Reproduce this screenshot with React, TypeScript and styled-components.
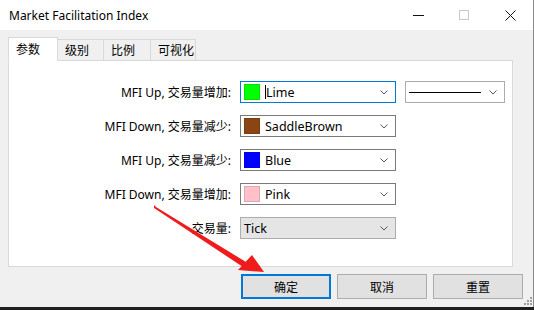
import React from "react";
import styled, { createGlobalStyle } from "styled-components";

const GlobalStyle = createGlobalStyle`
  html, body {
    margin: 0;
    padding: 0;
    background: #1e1e1e;
  }
  body {
    width: 534px;
    height: 310px;
    overflow: hidden;
    font-family: "Noto Sans", "Noto Sans CJK SC", sans-serif;
  }
`;

const FONT = `"Noto Sans", "Noto Sans CJK SC", sans-serif`;

type Row = {
  label: string;
  color?: string;
  value: string;
  focused?: boolean;
  readonly?: boolean;
  lineStyle?: boolean;
};

const rows: Row[] = [
  { label: "MFI Up, 交易量增加:", color: "#00ff00", value: "Lime", focused: true, lineStyle: true },
  { label: "MFI Down, 交易量减少:", color: "#8b4513", value: "SaddleBrown" },
  { label: "MFI Up, 交易量减少:", color: "#0000ff", value: "Blue" },
  { label: "MFI Down, 交易量增加:", color: "#ffc0cb", value: "Pink" },
  { label: "交易量:", value: "Tick", readonly: true },
];

const tabs = [
  { name: "参数", w: 50 },
  { name: "级别", w: 47 },
  { name: "比例", w: 48 },
  { name: "可视化", w: 46 },
];

const Chevron = () => (
  <svg width="8" height="5" viewBox="0 0 8 5">
    <path d="M0.5 0.5 L4 4 L7.5 0.5" fill="none" stroke="#555" strokeWidth="1" />
  </svg>
);

export default function App() {
  return (
    <>
      <GlobalStyle />
      <Window>
        <TitleBar>
          <Title>Market Facilitation Index</Title>
          <Controls>
            <CtrlBtn>
              <svg width="11" height="11" viewBox="0 0 11 11">
                <path d="M0 5.5 H11" stroke="#111" strokeWidth="1" />
              </svg>
            </CtrlBtn>
            <CtrlBtn>
              <svg width="11" height="11" viewBox="0 0 11 11">
                <rect x="0.5" y="0.5" width="9" height="9" fill="none" stroke="#c8c8c8" />
              </svg>
            </CtrlBtn>
            <CtrlBtn>
              <svg width="11" height="11" viewBox="0 0 11 11">
                <path d="M0.5 0.5 L10.5 10.5 M10.5 0.5 L0.5 10.5" stroke="#111" strokeWidth="1" />
              </svg>
            </CtrlBtn>
          </Controls>
        </TitleBar>
        <Body>
          <TabStrip>
            {tabs.map((t, i) => (
              <Tab key={t.name} $active={i === 0} $w={t.w}>
                {t.name}
              </Tab>
            ))}
          </TabStrip>
          <Panel>
            <Form>
              {rows.map((r) => (
                <React.Fragment key={r.label}>
                  <Label>{r.label}</Label>
                  <FieldGroup>
                    <Combo $focused={r.focused} $readonly={r.readonly}>
                      {r.color && <Swatch style={{ background: r.color }} />}
                      <ComboText $pad={!r.color}>
                        {r.focused && <Caret />}
                        {r.value}
                      </ComboText>
                      <Chevron />
                    </Combo>
                    {r.lineStyle && (
                      <LineCombo>
                        <LineSample />
                        <Chevron />
                      </LineCombo>
                    )}
                  </FieldGroup>
                </React.Fragment>
              ))}
            </Form>
          </Panel>
          <ButtonRow>
            <Button $default>确定</Button>
            <Button>取消</Button>
            <Button>重置</Button>
          </ButtonRow>
          <Grip>
            <svg width="8" height="8" viewBox="0 0 8 8">
              {[
                [6, 0],
                [6, 3],
                [3, 3],
                [6, 6],
                [3, 6],
                [0, 6],
              ].map(([x, y]) => (
                <rect key={`${x}-${y}`} x={x} y={y} width="2" height="2" fill="#a0a0a0" />
              ))}
            </svg>
          </Grip>
        </Body>
        <Arrow viewBox="0 0 534 310" width="534" height="310">
          <polygon
            points="154,205 156,207 246,262 243,267 154,208"
            fill="#ee1c1c"
          />
          <polygon points="264,272 238,270 252,255" fill="#ee1c1c" />
        </Arrow>
      </Window>
    </>
  );
}

const Window = styled.div`
  position: relative;
  width: 533px;
  height: 307px;
  background: #f0f0f0;
  border-right: 1px solid #8a8a8a;
  display: flex;
  flex-direction: column;
`;

const TitleBar = styled.div`
  height: 30px;
  background: #fff;
  display: flex;
  align-items: center;
  justify-content: space-between;
  padding-left: 9px;
`;

const Title = styled.div`
  font-family: ${FONT};
  font-size: 12px;
  color: #000;
`;

const Controls = styled.div`
  display: flex;
  height: 100%;
`;

const CtrlBtn = styled.div`
  width: 46px;
  height: 100%;
  display: flex;
  align-items: center;
  justify-content: center;
`;

const Body = styled.div`
  position: relative;
  flex: 1;
  display: flex;
  flex-direction: column;
  padding: 8px 20px 0 8px;
  border-left: 1px solid #2a2a2a;
  margin-left: -1px;
`;

const TabStrip = styled.div`
  display: flex;
  align-items: flex-end;
  height: 23px;
  position: relative;
  z-index: 1;
  margin-bottom: -1px;
`;

const Tab = styled.div<{ $active?: boolean; $w: number }>`
  font-family: ${FONT};
  font-size: 12px;
  color: #000;
  box-sizing: border-box;
  width: ${(p) => p.$w}px;
  height: ${(p) => (p.$active ? "24px" : "22px")};
  padding-left: 7px;
  display: flex;
  align-items: center;
  background: ${(p) => (p.$active ? "#fff" : "#f0f0f0")};
  border: 1px solid #d9d9d9;
  border-bottom: ${(p) => (p.$active ? "1px solid #fff" : "1px solid #d9d9d9")};
  margin-left: ${(p) => (p.$active ? "0" : "-1px")};
`;

const Panel = styled.div`
  box-sizing: border-box;
  height: 207px;
  background: #fff;
  border: 1px solid #d9d9d9;
  padding-top: 20px;
`;

const Form = styled.div`
  display: grid;
  grid-template-columns: 222px 1fr;
  column-gap: 9px;
  row-gap: 12px;
  align-items: center;
`;

const Label = styled.div`
  font-family: ${FONT};
  font-size: 12px;
  color: #000;
  text-align: right;
`;

const FieldGroup = styled.div`
  display: flex;
  gap: 9px;
  align-items: center;
`;

const Combo = styled.div<{ $focused?: boolean; $readonly?: boolean }>`
  box-sizing: border-box;
  width: 156px;
  height: 22px;
  display: flex;
  align-items: center;
  padding: 0 7px 0 3px;
  background: ${(p) => (p.$readonly ? "#e5e5e5" : "#fff")};
  border: 1px solid
    ${(p) => (p.$focused ? "#0078d7" : p.$readonly ? "#adadad" : "#7a7a7a")};
`;

const Swatch = styled.div`
  width: 16px;
  height: 16px;
  box-sizing: border-box;
  border: 1px solid rgba(0, 0, 0, 0.12);
  flex: none;
`;

const ComboText = styled.div<{ $pad?: boolean }>`
  flex: 1;
  font-family: ${FONT};
  font-size: 12.5px;
  color: #000;
  padding-left: ${(p) => (p.$pad ? "0" : "5px")};
  display: flex;
  align-items: center;
`;

const Caret = styled.span`
  width: 1px;
  height: 14px;
  background: #000;
`;

const LineCombo = styled.div`
  box-sizing: border-box;
  width: 100px;
  height: 22px;
  display: flex;
  align-items: center;
  gap: 8px;
  padding: 0 7px 0 3px;
  background: #fff;
  border: 1px solid #adadad;
`;

const LineSample = styled.div`
  flex: 1;
  height: 1px;
  background: #000;
`;

const ButtonRow = styled.div`
  display: flex;
  justify-content: flex-end;
  gap: 6px;
  margin-top: 7px;
  margin-right: -10px;
`;

const Button = styled.div<{ $default?: boolean }>`
  box-sizing: border-box;
  width: 90px;
  height: 25px;
  display: flex;
  align-items: center;
  justify-content: center;
  font-family: ${FONT};
  font-size: 12px;
  color: #000;
  background: #e1e1e1;
  border: ${(p) => (p.$default ? "2px solid #0078d7" : "1px solid #adadad")};
`;

const Grip = styled.div`
  position: absolute;
  right: 1px;
  bottom: 2px;
  line-height: 0;
`;

const Arrow = styled.svg`
  position: absolute;
  left: 0;
  top: 0;
  pointer-events: none;
`;
